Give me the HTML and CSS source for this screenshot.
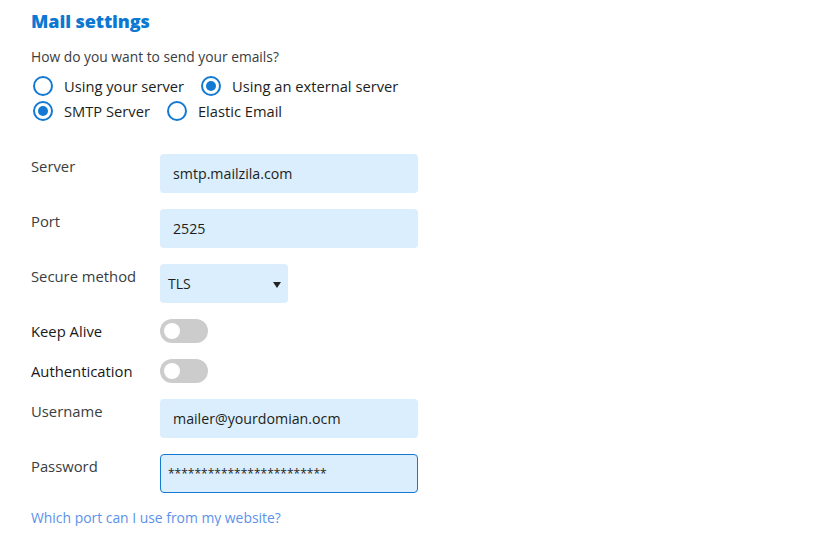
FILE: index.html
```html
<!DOCTYPE html>
<html>
<head>
<meta charset="utf-8">
<link rel="stylesheet" href="styles.css">
</head>
<body>
<div class="page">
  <h1 class="title">Mail settings</h1>
  <p class="question">How do you want to send your emails?</p>
  <div class="radio-row">
    <label class="radio"><span class="dot"></span>Using your server</label>
    <label class="radio"><span class="dot on"></span>Using an external server</label>
  </div>
  <div class="radio-row">
    <label class="radio"><span class="dot on"></span>SMTP Server</label>
    <label class="radio"><span class="dot"></span>Elastic Email</label>
  </div>

  <div class="form">
    <div class="row">
      <div class="label">Server</div>
      <div class="input">smtp.mailzila.com</div>
    </div>
    <div class="row">
      <div class="label">Port</div>
      <div class="input">2525</div>
    </div>
    <div class="row">
      <div class="label">Secure method</div>
      <div class="select"><span>TLS</span><span class="caret"></span></div>
    </div>
    <div class="row toggle-row">
      <div class="label strong">Keep Alive</div>
      <div class="toggle"><span class="knob"></span></div>
    </div>
    <div class="row toggle-row">
      <div class="label strong">Authentication</div>
      <div class="toggle"><span class="knob"></span></div>
    </div>
    <div class="row">
      <div class="label">Username</div>
      <div class="input">mailer@yourdomian.ocm</div>
    </div>
    <div class="row">
      <div class="label">Password</div>
      <div class="input focused pw">************************</div>
    </div>
  </div>
  <a class="link" href="#">Which port can I use from my website?</a>
</div>
</body>
</html>
```
FILE: styles.css
```css
* { box-sizing: border-box; }
html, body { margin: 0; padding: 0; background: #fff; }
body {
  font-family: "Open Sans", "Liberation Sans", sans-serif;
  color: #3a3d40;
}
.page {
  padding: 9px 0 0 31px;
  width: 836px;
}
.title {
  margin: 0;
  font-size: 18px;
  line-height: 24px;
  font-weight: 800;
  color: #0b78d2;
  letter-spacing: -0.1px;
}
.question {
  margin: 16px 0 0 0;
  font-size: 13.8px;
  line-height: 16px;
  color: #3a3d40;
}
.radio-row {
  display: flex;
  gap: 17px;
  height: 25px;
  align-items: center;
  margin-left: 2px;
}
.question + .radio-row { margin-top: 8px; }
.radio {
  display: flex;
  align-items: center;
  gap: 11px;
  font-size: 14.7px;
  color: #1c1e20;
}
.dot {
  width: 20px;
  height: 20px;
  border: 2px solid #1479d2;
  border-radius: 50%;
  display: flex;
  align-items: center;
  justify-content: center;
  background: #fff;
}
.dot.on::after {
  content: "";
  width: 10px;
  height: 10px;
  border-radius: 50%;
  background: #1479d2;
}
.form {
  margin-top: 31px;
  display: flex;
  flex-direction: column;
  gap: 16px;
}
.row {
  display: flex;
  align-items: flex-start;
}
.label {
  width: 129px;
  flex: none;
  font-size: 14.8px;
  line-height: 20px;
  padding-top: 2px;
  color: #3a3d40;
}
.label.strong { color: #17191b; padding-top: 0; }
.toggle-row { align-items: center; }
.input {
  width: 258px;
  height: 39px;
  background: #dbeefd;
  border-radius: 4px;
  display: flex;
  align-items: center;
  padding-left: 12px;
  font-size: 14.2px;
  color: #1c1e20;
  border: 1px solid transparent;
}
.input.focused { border-color: #1479d2; padding-left: 7px; }
.pw { font-size: 12px; letter-spacing: 0; }
.select {
  width: 128px;
  height: 39px;
  background: #dbeefd;
  border-radius: 4px;
  display: flex;
  align-items: center;
  justify-content: space-between;
  padding: 0 7px 0 8px;
  font-size: 14px;
  color: #1c1e20;
}
.caret {
  width: 0;
  height: 0;
  border-left: 4px solid transparent;
  border-right: 4px solid transparent;
  border-top: 6px solid #222;
  margin-top: 3px;
}
.toggle {
  width: 48px;
  height: 24px;
  border-radius: 12px;
  background: #cccccc;
  display: flex;
  align-items: center;
  padding-left: 4px;
}
.knob {
  width: 16px;
  height: 16px;
  border-radius: 50%;
  background: #fff;
}
.link {
  display: block;
  margin-top: 17px;
  font-size: 13.9px;
  line-height: 16px;
  color: #5b92ea;
  text-decoration: none;
}
```
